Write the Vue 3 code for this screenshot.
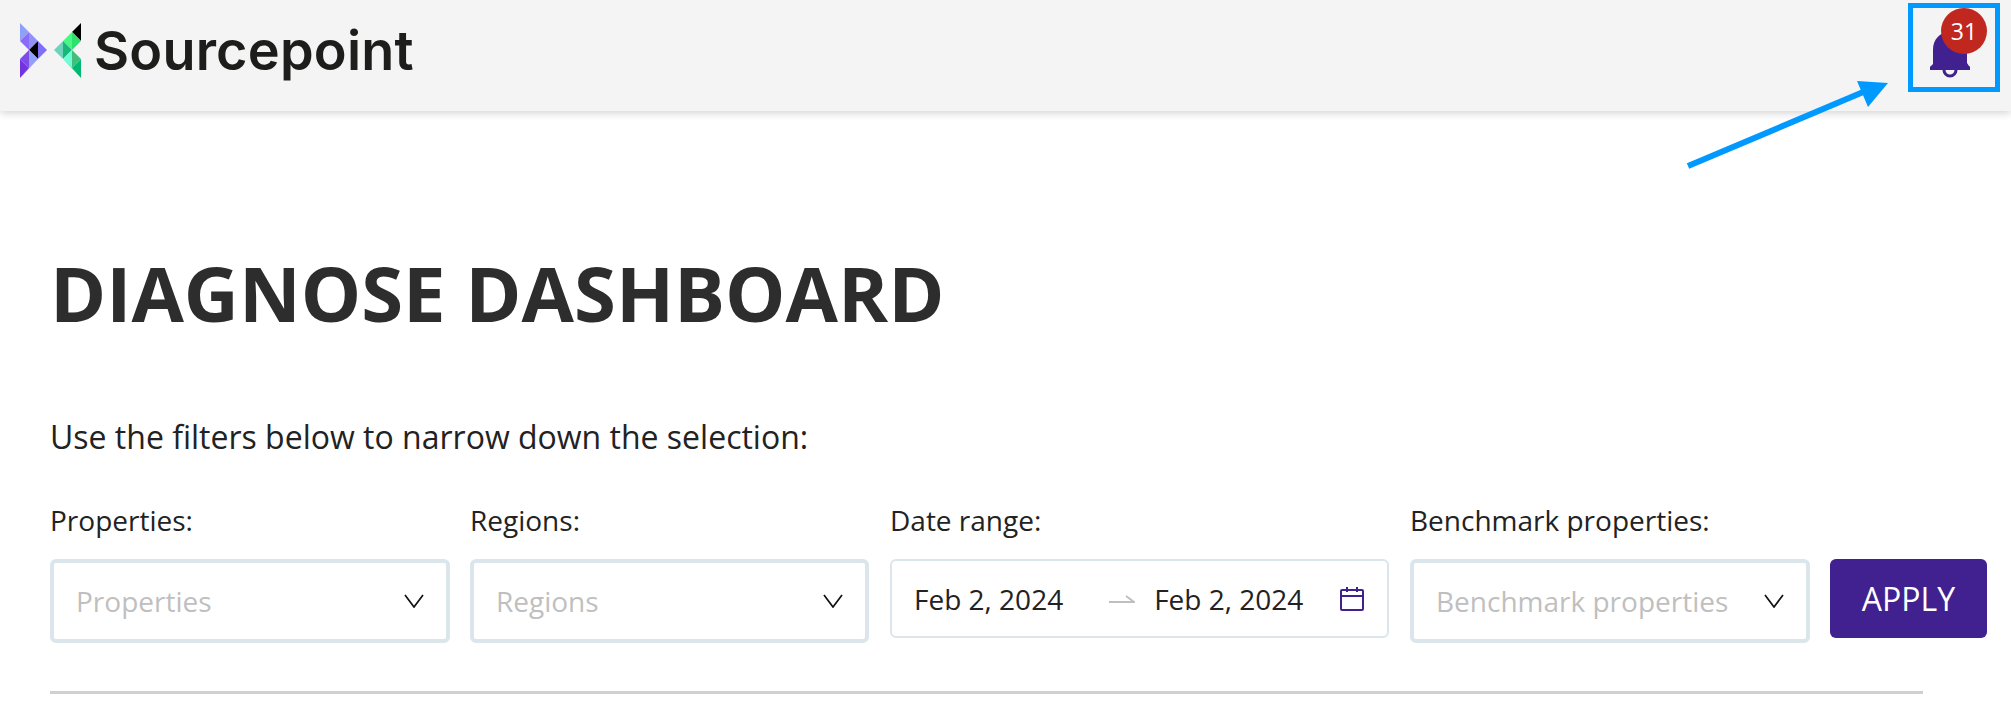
<template>
  <div class="page">
    <header class="topbar">
      <div class="brand">
        <svg class="logo" viewBox="0 0 61 55" width="61" height="55">
          <polygon v-for="(t, i) in logoTriangles" :key="i" :points="t.points" :fill="t.fill" />
        </svg>
        <span class="wordmark">Sourcepoint</span>
      </div>
      <div class="bell-wrap">
        <svg class="bell" viewBox="0 0 40 46" width="40" height="46">
          <path d="M3 32 V18 C3 7 10 0 20 0 C30 0 37 7 37 18 V31 L39 34 C40 34 40 35 40 36 V38 H0 V36 C0 35 0 34 1 34 Z" fill="#41218f" />
          <path d="M14 38 A6 6 0 0 0 26 38" fill="#f4f4f4" stroke="#41218f" stroke-width="3" />
        </svg>
        <span class="badge">31</span>
      </div>
    </header>

    <!-- annotation drawn over the screenshot -->
    <div class="callout-box"></div>
    <svg class="callout-arrow" viewBox="0 0 2011 712" width="2011" height="712">
      <line x1="1688" y1="166" x2="1868" y2="90" stroke="#0099ff" stroke-width="6" />
      <polygon points="1888,83 1857,81 1868,107" fill="#0099ff" />
    </svg>

    <main class="content">
      <h1>DIAGNOSE DASHBOARD</h1>
      <p class="hint">Use the filters below to narrow down the selection:</p>

      <div class="filters">
        <div class="field w-400">
          <label>Properties:</label>
          <div class="select">
            <span>Properties</span>
            <svg class="chevron" viewBox="0 0 20 14" width="20" height="14"><path d="M1 1 L10 13 L19 1" /></svg>
          </div>
        </div>
        <div class="field w-399 pull-left">
          <label>Regions:</label>
          <div class="select">
            <span>Regions</span>
            <svg class="chevron" viewBox="0 0 20 14" width="20" height="14"><path d="M1 1 L10 13 L19 1" /></svg>
          </div>
        </div>
        <div class="field w-499">
          <label>Date range:</label>
          <div class="dates">
            <span class="date">Feb 2, 2024</span>
            <svg class="sep" viewBox="0 0 26 10" width="26" height="10"><path d="M0 8 H25 L17 2" /></svg>
            <span class="date">Feb 2, 2024</span>
            <svg class="cal" viewBox="0 0 26 26" width="26" height="26">
              <rect x="2" y="4" width="22" height="20" rx="1" />
              <path d="M2 10 H24 M8 1 V6 M18 1 V6" />
            </svg>
          </div>
        </div>
        <div class="field w-400">
          <label>Benchmark properties:</label>
          <div class="select">
            <span>Benchmark properties</span>
            <svg class="chevron" viewBox="0 0 20 14" width="20" height="14"><path d="M1 1 L10 13 L19 1" /></svg>
          </div>
        </div>
        <button class="apply">APPLY</button>
      </div>

      <hr />
    </main>
  </div>
</template>

<script setup>
const logoTriangles = [
  { points: '0,0 9,9 0,18', fill: '#8fa0f8' },
  { points: '9,9 0,18 9,27', fill: '#8a6cf8' },
  { points: '9,9 18,18 9,27', fill: '#8f92f8' },
  { points: '18,18 9,27 18,36', fill: '#000000' },
  { points: '18,18 27,27 18,36', fill: '#7f6ff8' },
  { points: '9,27 18,36 9,45', fill: '#90a2f8' },
  { points: '0,36 9,27 9,45', fill: '#7d4be8' },
  { points: '0,36 9,45 0,55', fill: '#7333dd' },
  { points: '9,45 18,36 0,55', fill: '#8a5cf2' },
  { points: '61,0 61,18 52,9', fill: '#000000' },
  { points: '52,9 61,18 52,27', fill: '#2fe070' },
  { points: '52,9 43,18 52,27', fill: '#42fb80' },
  { points: '43,18 34,27 43,36', fill: '#6dd3bd' },
  { points: '43,18 52,27 43,36', fill: '#17b77a' },
  { points: '43,36 52,27 52,45', fill: '#70fcd5' },
  { points: '52,27 61,36 52,45', fill: '#3fbf78' },
  { points: '61,36 52,45 61,55', fill: '#00b874' },
  { points: '43,36 52,45 61,55', fill: '#00c67f' },
];
</script>

<style>
html, body {
  background: #ffffff;
}
</style>

<style scoped>
.page {
  position: relative;
  width: 2011px;
  height: 712px;
  overflow: hidden;
  background: #ffffff;
  font-family: 'Open Sans', sans-serif;
  color: #222222;
}

.topbar {
  height: 111px;
  box-sizing: border-box;
  display: flex;
  justify-content: space-between;
  align-items: flex-start;
  padding: 23px 30px 0 20px;
  background: #f4f4f4;
  box-shadow: 0 2px 8px rgba(0, 0, 0, 0.18);
}

.brand {
  display: flex;
  align-items: center;
  gap: 13px;
}

.logo {
  display: block;
}

.wordmark {
  font-family: Inter, sans-serif;
  font-size: 54px;
  font-weight: 600;
  letter-spacing: 0.2px;
  line-height: 55px;
  color: #1d1d1b;
}

.bell-wrap {
  position: relative;
  width: 51px;
  height: 55px;
  margin-top: 9px;
}

.bell {
  position: absolute;
  left: 0;
  top: 0;
}

.badge {
  position: absolute;
  left: 11px;
  top: -24px;
  width: 46px;
  height: 46px;
  border-radius: 50%;
  background: #c0281f;
  color: #ffffff;
  font-size: 23px;
  line-height: 46px;
  text-align: center;
}

.callout-box {
  position: absolute;
  left: 1908px;
  top: 3px;
  width: 92px;
  height: 89px;
  box-sizing: border-box;
  border: 5px solid #0099ff;
}

.callout-arrow {
  position: absolute;
  left: 0;
  top: 0;
  pointer-events: none;
}

.content {
  padding: 0 24px 0 50px;
}

h1 {
  margin: 133px 0 0;
  font-size: 76px;
  line-height: 98px;
  font-weight: 700;
  color: #2d2d2d;
}

.hint {
  margin: 75px 0 0;
  font-size: 32px;
  line-height: 40px;
}

.filters {
  display: flex;
  gap: 21px;
  margin-top: 47px;
  height: 139px;
}

.field {
  display: flex;
  flex-direction: column;
}

.w-400 { width: 400px; }
.w-399 { width: 399px; }
.w-499 { width: 499px; }
.pull-left { margin-left: -1px; }

label {
  height: 55px;
  font-size: 28px;
  line-height: 32px;
}

.select {
  height: 84px;
  box-sizing: border-box;
  display: flex;
  justify-content: space-between;
  align-items: center;
  padding: 0 22px;
  border: 4px solid #dbe6ec;
  border-radius: 6px;
  font-size: 28px;
  color: #bfbfbf;
}

.chevron path {
  fill: none;
  stroke: #111111;
  stroke-width: 1.7;
}

.dates {
  height: 79px;
  box-sizing: border-box;
  display: flex;
  align-items: center;
  padding: 0 22px;
  border: 2px solid #dbe6ec;
  border-radius: 6px;
  font-size: 28px;
}

.date {
  white-space: nowrap;
}

.sep {
  margin: 0 19px 0 46px;
}

.sep path {
  fill: none;
  stroke: #bfbfbf;
  stroke-width: 2;
}

.cal {
  margin-left: auto;
}

.cal rect,
.cal path {
  fill: none;
  stroke: #41218f;
  stroke-width: 2;
}

.apply {
  width: 157px;
  height: 79px;
  margin: 55px 0 0 -1px;
  border: none;
  border-radius: 6px;
  background: #41218f;
  color: #ffffff;
  font-family: 'Open Sans', sans-serif;
  font-size: 32px;
}

hr {
  margin: 48px 0 0;
  width: 1873px;
  height: 3px;
  border: none;
  background: #d0d0d0;
}
</style>
